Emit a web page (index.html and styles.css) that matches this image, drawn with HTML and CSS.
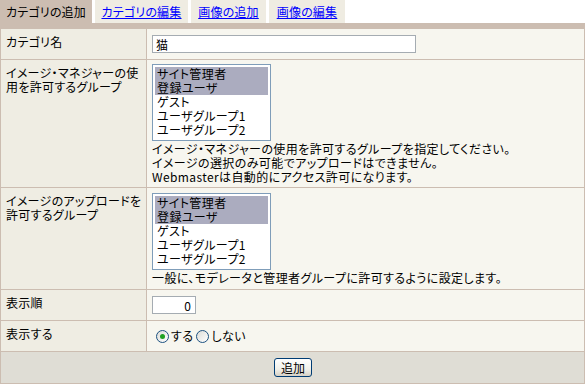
FILE: index.html
```html
<!DOCTYPE html>
<html lang="ja">
<head>
<meta charset="utf-8">
<link rel="stylesheet" href="styles.css">
</head>
<body>
<div class="tabs">
  <span class="tab active t1">カテゴリの追加</span>
  <a class="tab t2" href="#">カテゴリの編集</a>
  <a class="tab t3" href="#">画像の追加</a>
  <a class="tab t4" href="#">画像の編集</a>
</div>
<div class="bar"></div>
<form class="form">
  <div class="head">カテゴリ名</div>
  <div class="even"><input class="text" type="text" value="猫"></div>

  <div class="head">イメージ・マネジャーの使<br>用を許可するグループ</div>
  <div class="even lb2">
    <div class="listbox">
      <div class="opt sel">サイト管理者</div>
      <div class="opt sel">登録ユーザ</div>
      <div class="opt">ゲスト</div>
      <div class="opt">ユーザグループ1</div>
      <div class="opt">ユーザグループ2</div>
    </div>
    <div class="desc">イメージ・マネジャーの使用を許可するグループを指定してください。<br>イメージの選択のみ可能でアップロードはできません。<br>Webmasterは自動的にアクセス許可になります。</div>
  </div>

  <div class="head">イメージのアップロードを<br>許可するグループ</div>
  <div class="even lb3">
    <div class="listbox">
      <div class="opt sel">サイト管理者</div>
      <div class="opt sel">登録ユーザ</div>
      <div class="opt">ゲスト</div>
      <div class="opt">ユーザグループ1</div>
      <div class="opt">ユーザグループ2</div>
    </div>
    <div class="desc">一般に、モデレータと管理者グループに許可するように設定します。</div>
  </div>

  <div class="head">表示順</div>
  <div class="even"><input class="num" type="text" value="0"></div>

  <div class="head">表示する</div>
  <div class="even radios">
    <label class="radio"><input type="radio" name="disp" checked><span>する</span></label>
    <label class="radio"><input type="radio" name="disp"><span>しない</span></label>
  </div>

  <div class="foot"><button type="button" class="btn">追加</button></div>
</form>
</body>
</html>
```

FILE: styles.css
```css
html, body {
  margin: 0;
  padding: 0;
  background: #ffffff;
}
body {
  font-family: "Noto Sans CJK JP", "DejaVu Sans", sans-serif;
  font-size: 12px;
  line-height: 14px;
  color: #000;
  font-feature-settings: "palt" 1;
  letter-spacing: 0.4px;
  width: 585px;
}
.tabs {
  display: flex;
  height: 23px;
  gap: 3px;
}
.tab {
  display: block;
  height: 23px;
  line-height: 23px;
  background: #efece2;
  color: #0000ff;
  text-decoration: underline;
  text-align: center;
  white-space: nowrap;
  letter-spacing: 0.2px;
}
.tab.active {
  background: #ccbdb1;
  color: #000;
  text-decoration: none;
}
.t1 { width: 92px; }
.t2 { width: 93px; }
.t3 { width: 75px; }
.t4 { width: 76px; }
.bar {
  height: 5px;
  background: #ccbdb1;
}
.form {
  margin: 0;
  display: grid;
  grid-template-columns: 145px 437px;
  grid-template-rows: 30px 127px 101px 30px 30px 31px;
  gap: 1px;
  border: 1px solid #ccbdb1;
  background: #ccbdb1;
}
.head {
  background: #efede3;
  padding: 6px 5px;
  white-space: nowrap;
  letter-spacing: 0.3px;
}
.even {
  background: #f7f6ef;
  padding: 5px 5px;
}
.lb2 { padding-top: 4px; }
.text {
  box-sizing: border-box;
  width: 264px;
  height: 18px;
  margin: 1px 0 0 0;
  border: 1px solid #a5acb2;
  padding: 0 3px;
  font: inherit;
  background: #fff;
  display: block;
}
.num {
  box-sizing: border-box;
  width: 44px;
  height: 18px;
  margin: 1px 0 0 0;
  border: 1px solid #a5acb2;
  padding: 0 4px;
  font: inherit;
  text-align: right;
  background: #fff;
  display: block;
}
.listbox {
  box-sizing: border-box;
  width: 119px;
  height: 77px;
  border: 1px solid #7f9db9;
  padding: 2px 2px;
  background: #fff;
}
.opt {
  height: 14px;
  line-height: 14px;
  padding-left: 2px;
  white-space: nowrap;
}
.opt.sel {
  background: #abacbf;
}
.desc {
  margin-top: 1px;
  white-space: nowrap;
}
.radios {
  display: flex;
  align-items: center;
  padding-top: 5px;
  padding-left: 9px;
  gap: 3px;
}
.radio {
  display: flex;
  align-items: center;
  gap: 2px;
}
.radio input {
  appearance: none;
  -webkit-appearance: none;
  width: 13px;
  height: 13px;
  margin: 0;
  border: 1px solid #1c5180;
  border-radius: 50%;
  background: linear-gradient(135deg, #dcdcd7, #ffffff);
  box-sizing: border-box;
  position: relative;
}
.radio input:checked::after {
  content: "";
  position: absolute;
  left: 3px;
  top: 3px;
  width: 5px;
  height: 5px;
  border-radius: 50%;
  background: #21a121;
}
.foot {
  grid-column: 1 / span 2;
  background: #dfddd5;
  display: flex;
  justify-content: center;
  padding-top: 6px;
}
.btn {
  box-sizing: border-box;
  width: 38px;
  height: 19px;
  padding: 0;
  margin-left: 1px;
  border: 1px solid #003c74;
  border-radius: 3px;
  background: linear-gradient(#ffffff, #f0f0ea 60%, #d6d0c5);
  font: inherit;
  line-height: 16px;
  color: #000;
}
```
